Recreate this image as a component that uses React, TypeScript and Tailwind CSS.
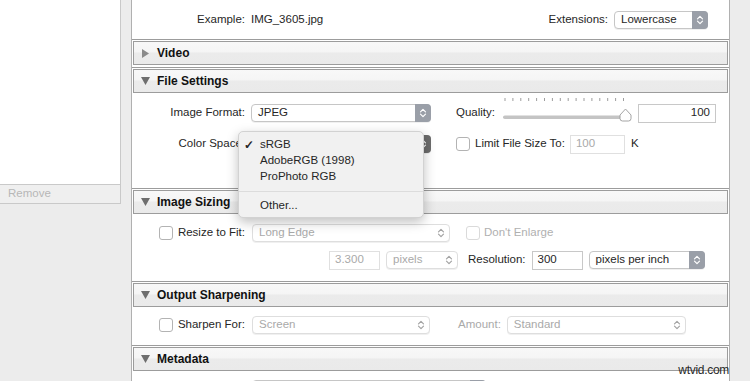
import React from "react";

function Chevrons({ color }: { color: string }) {
  return (
    <svg width="8" height="12" viewBox="0 0 8 12" fill="none">
      <path d="M1.5 4.8 L4 2.3 L6.5 4.8 M1.5 7.2 L4 9.7 L6.5 7.2" stroke={color} strokeWidth="1.2" strokeLinecap="round" strokeLinejoin="round" />
    </svg>
  );
}

function Select({ w, value, disabled, dark }: { w: string; value: string; disabled?: boolean; dark?: boolean }) {
  return (
    <div
      className={`flex h-[18px] ${w} shrink-0 items-center justify-between rounded-[4px] border bg-white pl-[6px] shadow-[0_1px_0_rgba(0,0,0,0.06)] ${
        disabled ? "border-[#dedede] text-[#a9a9a9]" : "border-[#c6c6c6] text-[#262626]"
      }`}
    >
      <span>{value}</span>
      {disabled ? (
        <div className="flex h-full w-[16px] items-center justify-center">
          <Chevrons color="#a3a3a3" />
        </div>
      ) : (
        <div
          className={`-mr-px -my-px flex h-[18px] w-[16px] items-center justify-center rounded-r-[4px] ${
            dark ? "bg-[#6c6c6c]" : "bg-[#9a9fa8]"
          }`}
        >
          <Chevrons color="#ffffff" />
        </div>
      )}
    </div>
  );
}

function Field({ w, value, disabled, right }: { w: string; value: string; disabled?: boolean; right?: boolean }) {
  return (
    <div
      className={`flex h-[19px] ${w} shrink-0 items-center border bg-white px-[5px] ${
        disabled ? "border-[#e0e0e0] text-[#a9a9a9]" : "border-[#c8c8c8] text-[#262626]"
      } ${right ? "justify-end" : ""}`}
    >
      {value}
    </div>
  );
}

function Check({ disabled }: { disabled?: boolean }) {
  return (
    <div
      className={`h-[14px] w-[14px] shrink-0 rounded-[3px] border bg-white ${
        disabled ? "border-[#dadada]" : "border-[#b3b3b3]"
      }`}
    />
  );
}

function Header({ title, open, last }: { title: string; open?: boolean; last?: boolean }) {
  return (
    <div className={`border-t border-[#9c9c9c] px-[1px] pt-[1px] ${last ? "pb-[2px]" : ""}`}>
      <div className="flex h-[24px] items-center border border-[#9c9c9c] bg-[linear-gradient(#f8f8f8_0%,#f5f5f5_45%,#ebebeb_50%,#eaeaea_100%)] pl-[7px]">
        {open ? (
          <svg width="9" height="8" viewBox="0 0 9 8">
            <path d="M0 0 H9 L4.5 8 Z" fill="#6e6e6e" />
          </svg>
        ) : (
          <svg width="9" height="9" viewBox="0 0 9 9">
            <path d="M1 0 L8 4.5 L1 9 Z" fill="#8a8a8a" />
          </svg>
        )}
        <span className="ml-[7px] text-[12px] font-bold text-[#111]">{title}</span>
      </div>
    </div>
  );
}

function Slider() {
  const ticks = Array.from({ length: 16 }, (_, i) => 2 + i * 7.9);
  return (
    <svg width="130" height="24" viewBox="0 0 130 24" className="mb-[6px] shrink-0">
      {ticks.map((x) => (
        <line key={x} x1={x} x2={x} y1="0" y2="3" stroke="#9d9d9d" strokeWidth="1" />
      ))}
      <rect x="0" y="17.5" width="124" height="3.5" rx="1.75" fill="#c4c4c4" />
      <path d="M117 17 L122.5 11 L128 17 V20.5 Q128 23 125.5 23 H119.5 Q117 23 117 20.5 Z" fill="#ffffff" stroke="#9a9a9a" strokeWidth="0.9" />
    </svg>
  );
}

function ColorMenu() {
  const item = "flex h-[16px] items-center";
  return (
    <div className="absolute -left-[13px] -top-[4px] z-10 w-[186px] rounded-[5px] border border-[#d2d2d2] bg-[#f1f1f1] pb-[3px] pt-[5px] text-[#262626] shadow-[0_4px_12px_rgba(0,0,0,0.25)]">
      <div className={item}>
        <span className="w-[21px] pl-[5px] text-[12px] font-bold">✓</span>
        <span>sRGB</span>
      </div>
      <div className={`${item} pl-[21px]`}>AdobeRGB (1998)</div>
      <div className={`${item} pl-[21px]`}>ProPhoto RGB</div>
      <div className="my-[6px] h-px bg-[#dcdcdc]" />
      <div className={`${item} pl-[21px]`}>Other...</div>
    </div>
  );
}

export default function App() {
  return (
    <div className="relative flex h-[381px] w-[750px] items-start overflow-hidden bg-[#ececec] font-['Liberation_Sans',Arial,sans-serif] text-[11.5px] text-[#262626]">
      {/* left list */}
      <div className="flex w-[121px] shrink-0 flex-col">
        <div className="h-[185px] border-b border-r border-[#c9c9c9] bg-white" />
        <div className="flex h-[19px] items-center border-b border-r border-[#c9c9c9] bg-[#efefef] pl-[8px] text-[#b7b7b7]">
          Remove
        </div>
      </div>

      {/* export settings panel */}
      <div className="ml-[10px] w-[599px] shrink-0 border-x border-[#b0b0b0] bg-white pb-[20px]">
        <div className="flex h-[39px] items-center">
          <span className="w-[113px] text-right">Example:</span>
          <span className="ml-[6px]">IMG_3605.jpg</span>
          <span className="ml-auto">Extensions:</span>
          <div className="ml-[6px] mr-[21px]">
            <Select w="w-[94px]" value="Lowercase" />
          </div>
        </div>

        <Header title="Video" last />

        <Header title="File Settings" open />
        <div className="flex h-[95px] flex-col gap-[13px] pt-[11px]">
          <div className="flex h-[18px] items-center">
            <span className="w-[113px] text-right">Image Format:</span>
            <div className="ml-[6px]">
              <Select w="w-[180px]" value="JPEG" />
            </div>
            <span className="ml-[25px]">Quality:</span>
            <div className="ml-[8px]">
              <Slider />
            </div>
            <div className="ml-[5px]">
              <Field w="w-[78px]" value="100" right />
            </div>
          </div>
          <div className="flex h-[18px] items-center">
            <span className="w-[113px] text-right">Color Space:</span>
            <div className="relative ml-[6px]">
              <Select w="w-[180px]" value="sRGB" dark />
              <ColorMenu />
            </div>
            <div className="ml-[25px]">
              <Check />
            </div>
            <span className="ml-[5px]">Limit File Size To:</span>
            <div className="ml-[5px]">
              <Field w="w-[55px]" value="100" disabled />
            </div>
            <span className="ml-[6px]">K</span>
          </div>
        </div>

        <Header title="Image Sizing" open />
        <div className="flex h-[67px] flex-col gap-[9px] pt-[10px]">
          <div className="flex h-[18px] items-center">
            <div className="flex w-[113px] items-center justify-end gap-[5px]">
              <Check />
              <span>Resize to Fit:</span>
            </div>
            <div className="ml-[7px]">
              <Select w="w-[198px]" value="Long Edge" disabled />
            </div>
            <div className="ml-[16px]">
              <Check disabled />
            </div>
            <span className="ml-[4px] text-[#b0b0b0]">Don't Enlarge</span>
          </div>
          <div className="flex h-[18px] items-center">
            <div className="ml-[197px]">
              <Field w="w-[51px]" value="3.300" disabled />
            </div>
            <div className="ml-[6px]">
              <Select w="w-[72px]" value="pixels" disabled />
            </div>
            <span className="ml-[10px]">Resolution:</span>
            <div className="ml-[6px]">
              <Field w="w-[51px]" value="300" />
            </div>
            <div className="ml-[6px]">
              <Select w="w-[116px]" value="pixels per inch" />
            </div>
          </div>
        </div>

        <Header title="Output Sharpening" open />
        <div className="flex h-[38px] flex-col pt-[9px]">
          <div className="flex h-[18px] items-center">
            <div className="flex w-[113px] items-center justify-end gap-[5px]">
              <Check />
              <span>Sharpen For:</span>
            </div>
            <div className="ml-[7px]">
              <Select w="w-[178px]" value="Screen" disabled />
            </div>
            <span className="ml-[28px] text-[#a9a9a9]">Amount:</span>
            <div className="ml-[6px]">
              <Select w="w-[179px]" value="Standard" disabled />
            </div>
          </div>
        </div>

        <Header title="Metadata" open />
        <div className="flex flex-col pt-[9px]">
          <div className="flex h-[18px] items-center">
            <div className="ml-[120px]">
              <Select w="w-[234px]" value="" />
            </div>
          </div>
        </div>
      </div>

      <span className="absolute bottom-[2px] right-[21px] text-[12px] tracking-[-0.3px] text-[#2a2a2a]">wtvid.com</span>
    </div>
  );
}
